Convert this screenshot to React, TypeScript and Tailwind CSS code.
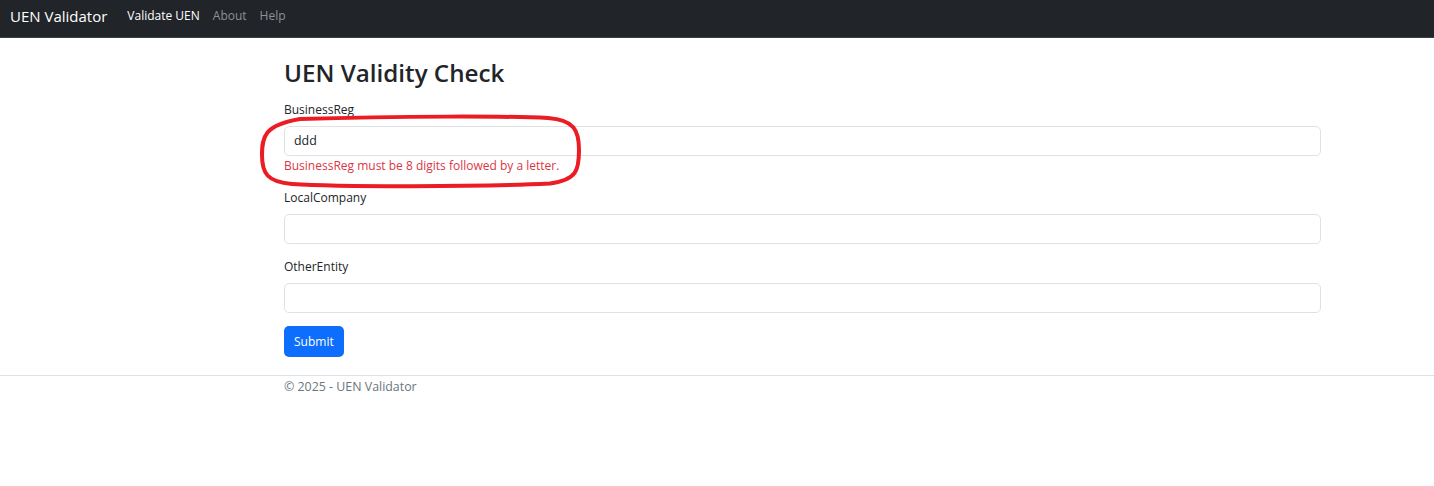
import React from "react";

const FONT = { fontFamily: '"Open Sans", "Segoe UI", Arial, sans-serif' };

function Field({
  label,
  value,
  error,
  className,
}: {
  label: string;
  value?: string;
  error?: string;
  className?: string;
}) {
  return (
    <div className={className}>
      <label className="block text-[12px] leading-[16px] text-[#212529]">
        {label}
      </label>
      <div className="mt-[8px] flex h-[30px] w-[1037px] items-center rounded-[5px] border border-[#dee2e6] bg-white px-[9px] text-[12.4px] text-[#212529]">
        {value}
      </div>
      {error && (
        <p className="mt-[2px] text-[12px] leading-[16px] text-[#dc3545]">
          {error}
        </p>
      )}
    </div>
  );
}

export default function App() {
  return (
    <div className="relative min-h-screen bg-white" style={FONT}>
      {/* Navbar */}
      <nav className="flex h-[38px] items-center border-b border-[#3a3f44] bg-[#212529] pb-[5px] pl-[10px]">
        <span className="text-[15px] leading-none text-white">UEN Validator</span>
        <ul className="ml-[20px] flex items-center gap-[13px] text-[12px] leading-none">
          <li className="text-white">Validate UEN</li>
          <li className="text-[#8e9093]">About</li>
          <li className="text-[#8e9093]">Help</li>
        </ul>
      </nav>

      {/* Form */}
      <main className="pl-[284px]">
        <h2 className="mt-[21px] text-[24.2px] font-semibold leading-[28px] text-[#212529]">
          UEN Validity Check
        </h2>

        <Field
          className="mt-[15px]"
          label="BusinessReg"
          value="ddd"
          error="BusinessReg must be 8 digits followed by a letter."
        />
        <Field className="mt-[16px]" label="LocalCompany" />
        <Field className="mt-[15px]" label="OtherEntity" />

        <button className="mt-[13px] h-[31px] rounded-[5px] bg-[#0d6efd] px-[10px] text-[12px] text-white">
          Submit
        </button>
      </main>

      {/* Footer */}
      <footer className="mt-[18px] border-t border-[#dee2e6] pl-[284px] pt-[3px]">
        <p className="text-[12.4px] leading-[16px] text-[#6c757d]">
          © 2025 - UEN Validator
        </p>
      </footer>

      {/* Annotation */}
      <svg
        className="pointer-events-none absolute left-0 top-0"
        width="1434"
        height="486"
        viewBox="0 0 1434 486"
      >
        <path
          d="M 300 119 C 400 116, 510 116, 548 118 C 574 120, 579 130, 579 150 C 579 170, 577 180, 550 183.5 C 480 187, 340 187, 292 184 C 267 182, 262 173, 262 155 C 262 137, 264 125, 300 119 Z"
          fill="none"
          stroke="#ec1c24"
          strokeWidth="4"
        />
      </svg>
    </div>
  );
}
